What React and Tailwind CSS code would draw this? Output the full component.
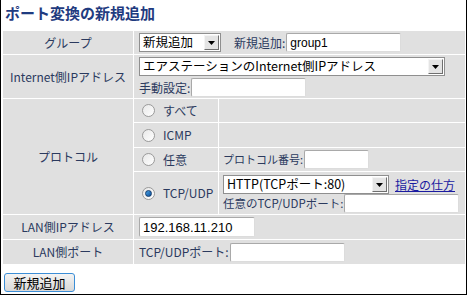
const font = { fontFamily: '"Noto Sans CJK JP", "Noto Sans", sans-serif' };

const Input = ({ value = "", className = "" }) => (
  <div
    className={`h-[19px] shrink-0 bg-white border border-[#a9a9a9] border-r-[#dcdcdc] border-b-[#dcdcdc] rounded-[2px] flex items-center px-[3px] text-[12px] text-black leading-none ${className}`}
    style={{ fontFamily: '"Liberation Sans", "Noto Sans CJK JP", sans-serif' }}
  >
    {value}
  </div>
);

const Select = ({ value, className = "" }) => (
  <div
    className={`h-[19px] shrink-0 bg-white border border-[#8f8f8f] flex items-center justify-between pl-[3px] pr-[1px] text-[12.5px] text-black leading-none ${className}`}
  >
    <span className="whitespace-nowrap">{value}</span>
    <span className="w-[15px] h-[15px] bg-[#e4e4e4] border border-[#f4f4f4] border-r-[#6f6f6f] border-b-[#6f6f6f] flex items-center justify-center shrink-0">
      <svg width="7" height="4" viewBox="0 0 7 4">
        <path d="M0 0 H7 L3.5 4 Z" fill="#000" />
      </svg>
    </span>
  </div>
);

const Radio = ({ checked }) => (
  <span className="w-[13px] h-[13px] rounded-full border border-[#9a9a9a] bg-gradient-to-br from-[#e8e8e8] to-[#ffffff] flex items-center justify-center shrink-0">
    {checked && (
      <span className="w-[7px] h-[7px] rounded-full bg-gradient-to-br from-[#4aa3e6] to-[#0a4f9a] border border-[#123a6a]" />
    )}
  </span>
);

const Label = ({ children }) => (
  <div className="bg-[#e0e0e0] flex items-center justify-center text-[12px] text-[#2b3a5e] whitespace-nowrap">
    {children}
  </div>
);

const Cell = ({ children, className = "" }) => (
  <div className={`bg-[#e0e0e0] text-[11px] text-[#2b3a5e] whitespace-nowrap ${className}`}>
    {children}
  </div>
);

const RadioCell = ({ label, checked }) => (
  <Cell className="flex items-center gap-[8px] pl-[8px] text-[12px]">
    <Radio checked={checked} />
    <span>{label}</span>
  </Cell>
);

export default function App() {
  return (
    <div
      className="w-[467px] h-[295px] border-l border-r border-b border-black bg-white pl-[2px]"
      style={font}
    >
      <h1 className="h-[31px] pl-[2px] pt-[3px] text-[15px] font-bold text-[#1f3b80] leading-[20px]">
        ポート変換の新規追加
      </h1>

      <div className="w-[462px] grid grid-cols-[130px_331px] gap-px bg-white">
        <Label>
          <div className="h-[23px] flex items-center">グループ</div>
        </Label>
        <Cell className="h-[23px] flex items-center pl-[5px] text-[12px]">
          <Select value="新規追加" className="w-[82px]" />
          <span className="ml-[13px] mr-[1px]">新規追加:</span>
          <Input value="group1" className="w-[115px]" />
        </Cell>

        <Label>Internet側IPアドレス</Label>
        <Cell className="h-[43px] flex flex-col pl-[5px] pt-[2px] gap-[2px] text-[12px]">
          <Select value="エアステーションのInternet側IPアドレス" className="w-[306px]" />
          <div className="flex items-center">
            <span className="mr-[1px]">手動設定:</span>
            <Input className="w-[115px]" />
          </div>
        </Cell>

        <Label>プロトコル</Label>
        <div className="grid grid-cols-[84px_246px] grid-rows-[23px_24px_23px_42px] gap-px bg-white">
          <RadioCell label="すべて" />
          <Cell />
          <RadioCell label="ICMP" />
          <Cell />
          <RadioCell label="任意" />
          <Cell className="flex items-center pl-[4px]">
            <span className="mr-[1px]">プロトコル番号:</span>
            <Input className="w-[65px]" />
          </Cell>
          <RadioCell label="TCP/UDP" checked />
          <Cell className="flex flex-col pl-[4px] pt-[3px]">
            <div className="flex items-center">
              <Select value="HTTP(TCPポート:80)" className="w-[166px]" />
              <a href="#" className="ml-[6px] text-[12px] text-[#1a1aa0] underline">
                指定の仕方
              </a>
            </div>
            <div className="flex items-center">
              <span className="mr-[1px] text-[11.5px]">任意のTCP/UDPポート:</span>
              <Input className="w-[115px]" />
            </div>
          </Cell>
        </div>

        <Label>LAN側IPアドレス</Label>
        <Cell className="h-[24px] flex items-center pl-[5px]">
          <Input value="192.168.11.210" className="w-[116px] h-[20px] text-[13px]" />
        </Cell>

        <Label>LAN側ポート</Label>
        <Cell className="h-[24px] flex items-center pl-[5px] text-[12px]">
          <span className="mr-[1px]">TCP/UDPポート:</span>
          <Input className="w-[115px]" />
        </Cell>
      </div>

      <button className="mt-[9px] ml-[1px] w-[71px] h-[19px] border border-[#3c8ed6] rounded-[3px] bg-gradient-to-b from-[#f4f4f4] to-[#d8d8d8] text-[13px] text-black leading-none">
        新規追加
      </button>
    </div>
  );
}
